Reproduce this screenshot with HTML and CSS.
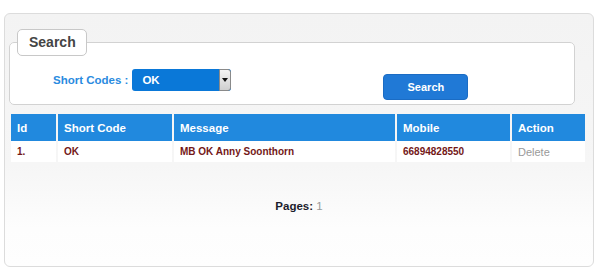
FILE: index.html
```html
<!DOCTYPE html>
<html lang="en">
<head>
    <meta charset="UTF-8">
    <title>Short Codes</title>
    <link rel="stylesheet" href="styles.css">
</head>
<body>

<div class="panel">
    <fieldset class="search-box">
        <legend>Search</legend>
        <div class="search-row">
            <label class="field-label">Short Codes :</label>
            <div class="fake-select">
                <span>OK</span>
                <span class="select-arrow"></span>
            </div>
            <button class="search-btn">Search</button>
        </div>
    </fieldset>

    <table class="result-table">
        <thead>
            <tr>
                <th class="col-id">Id</th>
                <th class="col-code">Short Code</th>
                <th class="col-msg">Message</th>
                <th class="col-mobile">Mobile</th>
                <th class="col-action">Action</th>
            </tr>
        </thead>
        <tbody>
            <tr>
                <td>1.</td>
                <td>OK</td>
                <td>MB OK Anny Soonthorn</td>
                <td>66894828550</td>
                <td class="action">Delete</td>
            </tr>
        </tbody>
    </table>

    <div class="pages">Pages: <span>1</span></div>
</div>

</body>
</html>
```

FILE: styles.css
```css
body {
    margin: 0;
    background: #fff;
    font-family: "Liberation Sans", Arial, sans-serif;
}
.panel {
    margin: 13px 0 0 4px;
    width: 588px;
    height: 252px;
    border: 1px solid #dcdcdc;
    border-radius: 6px;
    background: linear-gradient(#f3f3f3, #f6f6f6 60%, #fdfdfd 85%, #fefefe);
}

.search-box {
    margin: 15px 0 0 4px;
    width: 566px;
    box-sizing: border-box;
    padding: 0 0 4px 7px;
    border: 1px solid #d2d2d2;
    border-radius: 5px;
    background: #fff;
}
.search-box legend {
    box-sizing: border-box;
    width: 70px;
    height: 27px;
    padding: 0 0 0 11px;
    border: 1px solid #c8c8c8;
    border-radius: 5px;
    background: #fff;
    color: #444;
    font-size: 14px;
    font-weight: bold;
    line-height: 25px;
}
.search-row {
    display: flex;
    align-items: flex-start;
    padding-top: 13px;
}
.field-label {
    margin: 5px 0 0 36px;
    color: #2a8be0;
    font-size: 11.5px;
    font-weight: bold;
}
.fake-select {
    display: flex;
    justify-content: space-between;
    margin-left: 4px;
    width: 99px;
    height: 22px;
    box-sizing: border-box;
    padding-left: 10px;
    border-radius: 3px;
    background: #0a78d8;
    color: #fff;
    font-size: 11.5px;
    font-weight: bold;
    line-height: 22px;
}
.select-arrow {
    position: relative;
    width: 12px;
    height: 22px;
    box-sizing: border-box;
    border: 1px solid #8a8a8a;
    border-radius: 0 3px 3px 0;
    background: linear-gradient(#f4f4f4, #cfcfcf);
}
.select-arrow::after {
    content: "";
    position: absolute;
    left: 2px;
    top: 8px;
    border-left: 3px solid transparent;
    border-right: 3px solid transparent;
    border-top: 4px solid #111;
}
.search-btn {
    margin: 5px 0 0 152px;
    width: 85px;
    height: 26px;
    border: 1px solid #1b6cc4;
    border-radius: 4px;
    background: #2079d6;
    color: #fff;
    font-family: "Liberation Sans", Arial, sans-serif;
    font-size: 11px;
    font-weight: bold;
    padding: 0;
}

.result-table {
    margin: 9px 0 0 4px;
    border-collapse: separate;
    border-spacing: 2px 0;
    table-layout: fixed;
    width: 578px;
    font-size: 11.5px;
    font-weight: bold;
}
.result-table th,
.result-table td {
    box-sizing: border-box;
    padding: 0 6px;
    text-align: left;
}
.result-table th {
    height: 27px;
    background: #2189de;
    color: #fff;
}
.result-table td {
    height: 21px;
    background: #fff;
    color: #731818;
    font-size: 10px;
}
.result-table td.action {
    color: #9a9a9a;
    font-size: 11px;
    font-weight: normal;
}
.col-id { width: 45px; }
.col-code { width: 114px; }
.col-msg { width: 221px; }
.col-mobile { width: 113px; }
.col-action { width: 73px; }

.pages {
    margin-top: 38px;
    text-align: center;
    color: #1c1c2c;
    font-size: 11.5px;
    font-weight: bold;
}
.pages span {
    color: #999;
    font-weight: normal;
}
```
